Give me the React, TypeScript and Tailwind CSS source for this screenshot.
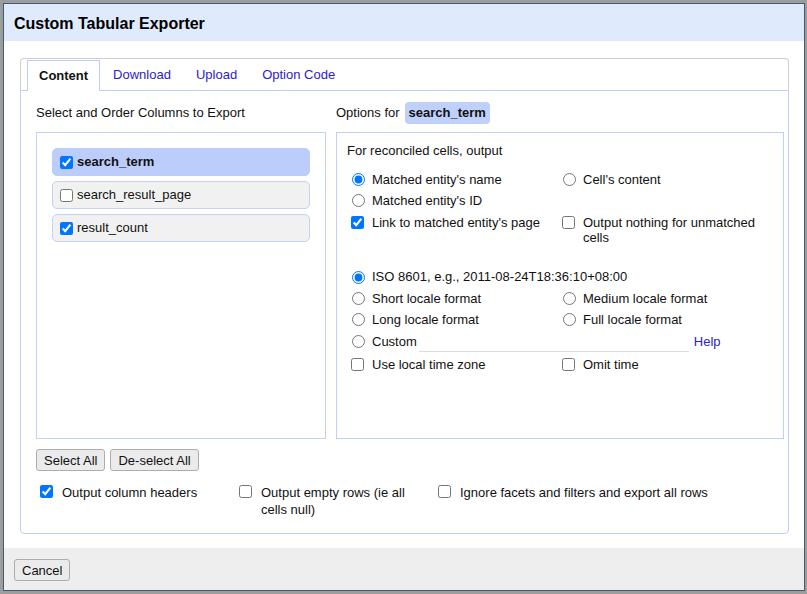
import React from 'react'

const font = "font-['Liberation_Sans',Arial,sans-serif]"

type Col = { name: string; checked: boolean; active?: boolean }

const columns: Col[] = [
  { name: 'search_term', checked: true, active: true },
  { name: 'search_result_page', checked: false },
  { name: 'result_count', checked: true },
]

function Radio({ label, checked, name }: { label: string; checked?: boolean; name: string }) {
  return (
    <label className="flex items-center h-[21px]">
      <input type="radio" name={name} defaultChecked={checked} className="m-0 ml-[5px] w-[13px] h-[13px]" />
      <span className="ml-[7px]">{label}</span>
    </label>
  )
}

function Check({ label, checked }: { label: React.ReactNode; checked?: boolean }) {
  return (
    <label className="flex items-start pt-[4px]">
      <input type="checkbox" defaultChecked={checked} className="m-0 ml-[4px] mt-[1px] w-[13px] h-[13px] shrink-0" />
      <span className="ml-[8px] leading-[15px]">{label}</span>
    </label>
  )
}

function ColumnItem({ col }: { col: Col }) {
  return (
    <div
      className={
        col.active
          ? 'flex items-center h-[28px] rounded-[5px] border border-[#bccdfb] bg-[#bccdfb] pl-[7px]'
          : 'flex items-center h-[28px] rounded-[5px] border border-[#c3d1f4] bg-[#f1f1f1] pl-[7px]'
      }
    >
      <input type="checkbox" defaultChecked={col.checked} className="m-0 w-[13px] h-[13px]" />
      <span className={col.active ? 'ml-[4px] font-bold' : 'ml-[4px]'}>{col.name}</span>
    </div>
  )
}

function Button({ children }: { children: React.ReactNode }) {
  return (
    <button className="h-[22px] px-[7px] rounded-[3px] border border-[#adadad] bg-[#ebebeb] text-[13px] text-[#111] leading-none">
      {children}
    </button>
  )
}

export default function App() {
  const tabs = ['Content', 'Download', 'Upload', 'Option Code']

  return (
    <div className={`${font} w-[807px] h-[594px] bg-[#9d9d9d] pt-[3px] pl-[3px] text-[13px] text-[#111]`}>
      <div className="w-[802px] h-[588px] border border-[#405b74] bg-white flex flex-col">
        {/* title bar */}
        <div className="h-[37px] shrink-0 bg-[#dfeafd] flex items-center pl-[10px] pt-[2px]">
          <h1 className="text-[16px] font-bold text-black">Custom Tabular Exporter</h1>
        </div>

        {/* body */}
        <div className="h-[507px] shrink-0 pt-[17px] pl-[16px] pr-[15px]">
          <div className="w-[769px]">
            <div className="h-[32px] border-t border-x border-[#cfcfcf] rounded-t-[4px] px-[6px] pt-[1px] flex gap-[1px]">
              {tabs.map((t, i) =>
                i === 0 ? (
                  <div
                    key={t}
                    className="relative z-10 h-[31px] -mb-px px-[11px] border-t border-x border-[#bdcdf4] bg-white flex items-center font-bold text-[#111]"
                  >
                    {t}
                  </div>
                ) : (
                  <div key={t} className="h-[30px] px-[11px] border border-transparent flex items-center text-[#2b22cc]">
                    {t}
                  </div>
                )
              )}
            </div>

            <div className="border border-[#c0cff5] rounded-b-[4px] px-[15px] pt-[11px] pb-[15px]">
              <div className="flex gap-[10px]">
                <div className="w-[290px] shrink-0">
                  <div className="h-[22px] flex items-center">Select and Order Columns to Export</div>
                  <div className="mt-[8px] h-[307px] border border-[#c2d0f5] p-[15px] flex flex-col gap-[5px]">
                    {columns.map(c => (
                      <ColumnItem key={c.name} col={c} />
                    ))}
                  </div>
                </div>

                <div className="flex-1">
                  <div className="h-[22px] flex items-center">
                    <span>Options for</span>
                    <span className="ml-[5px] h-[22px] px-[4px] rounded-[4px] bg-[#bfd0fb] font-bold flex items-center">
                      search_term
                    </span>
                  </div>
                  <div className="mt-[8px] h-[307px] border border-[#c2d0f5] pl-[10px] pt-[10px]">
                    <div className="h-[15px] leading-[15px]">For reconciled cells, output</div>

                    <div className="mt-[11px] grid grid-cols-[211px_1fr]">
                      <Radio name="rec" label="Matched entity's name" checked />
                      <Radio name="rec" label="Cell's content" />
                      <Radio name="rec" label="Matched entity's ID" />
                      <div />
                      <Check label="Link to matched entity's page" checked />
                      <Check label={<span className="block w-[200px]">Output nothing for unmatched cells</span>} />
                    </div>

                    <div className="mt-[21px] flex flex-col">
                      <div className="h-[22px] flex items-center">
                        <Radio name="date" label="ISO 8601, e.g., 2011-08-24T18:36:10+08:00" checked />
                      </div>
                      <div className="grid grid-cols-[211px_1fr]">
                        <Radio name="date" label="Short locale format" />
                        <Radio name="date" label="Medium locale format" />
                        <Radio name="date" label="Long locale format" />
                        <Radio name="date" label="Full locale format" />
                      </div>
                      <div className="h-[23px] flex items-center">
                        <input type="radio" name="date" className="m-0 ml-[5px] w-[13px] h-[13px]" />
                        <span className="ml-[7px]">Custom</span>
                        <input
                          type="text"
                          className="ml-[2px] mt-[1px] w-[270px] h-[19px] border-b border-[#dcdcdc] outline-none bg-transparent"
                        />
                        <span className="ml-[5px] text-[#2b22cc]">Help</span>
                      </div>
                      <div className="grid grid-cols-[211px_1fr]">
                        <Check label="Use local time zone" />
                        <Check label="Omit time" />
                      </div>
                    </div>
                  </div>
                </div>
              </div>

              <div className="mt-[10px] flex gap-[5px]">
                <Button>Select All</Button>
                <Button>De-select All</Button>
              </div>

              <div className="mt-[13px] grid grid-cols-[199px_199px_1fr]">
                <label className="flex items-start">
                  <input type="checkbox" defaultChecked className="m-0 ml-[4px] mt-[1px] w-[13px] h-[13px] shrink-0" />
                  <span className="ml-[9px] leading-[17px]">Output column headers</span>
                </label>
                <label className="flex items-start">
                  <input type="checkbox" className="m-0 ml-[4px] mt-[1px] w-[13px] h-[13px] shrink-0" />
                  <span className="ml-[9px] w-[165px] leading-[17px]">Output empty rows (ie all cells null)</span>
                </label>
                <label className="flex items-start">
                  <input type="checkbox" className="m-0 ml-[4px] mt-[1px] w-[13px] h-[13px] shrink-0" />
                  <span className="ml-[9px] leading-[17px]">Ignore facets and filters and export all rows</span>
                </label>
              </div>
            </div>
          </div>
        </div>

        {/* footer */}
        <div className="flex-1 bg-[#eeeeee] pl-[10px] pt-[11px]">
          <Button>Cancel</Button>
        </div>
      </div>
    </div>
  )
}
